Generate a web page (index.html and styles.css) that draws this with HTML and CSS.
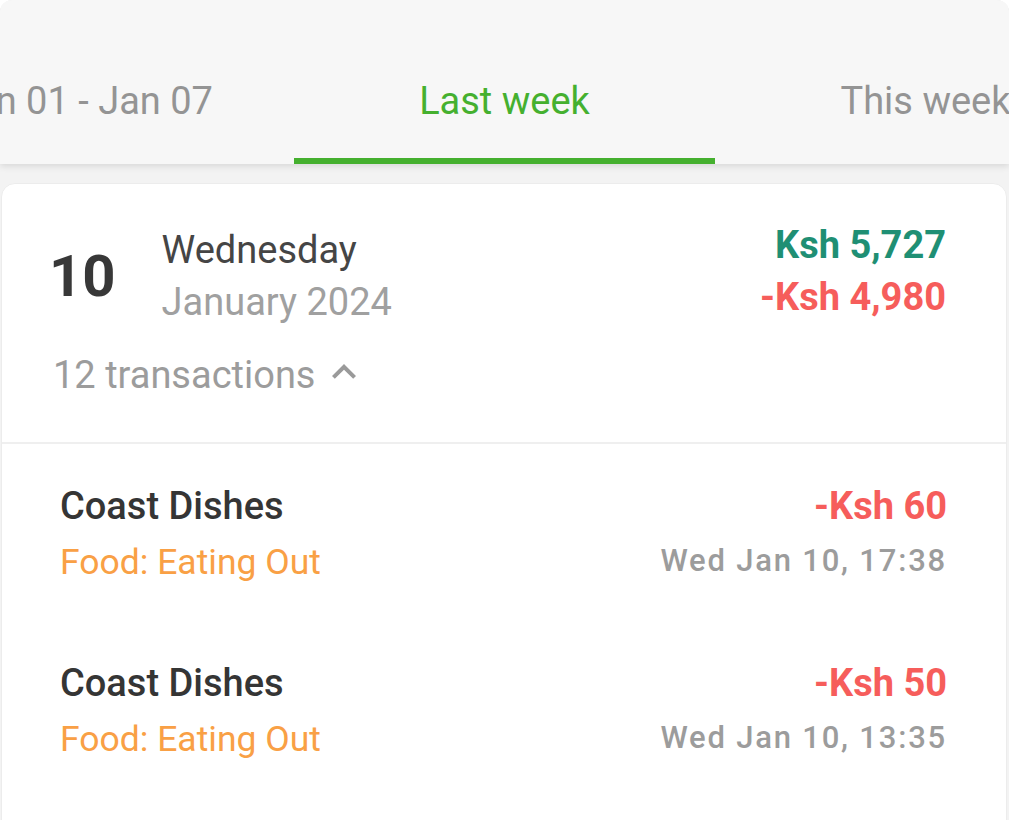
FILE: index.html
```html
<!DOCTYPE html>
<html lang="en">
<head>
  <meta charset="UTF-8" />
  <meta name="viewport" content="width=device-width, initial-scale=1.0" />
  <title>Transactions</title>
  <link rel="stylesheet" href="styles.css">
</head>
<body>
  <div class="app">
    <nav class="tabs">
      <div class="tab-strip">
        <a class="tab">Jan 01 - Jan 07</a>
        <a class="tab active">Last week</a>
        <a class="tab">This week</a>
      </div>
    </nav>

    <section class="day-card">
      <header class="day-head">
        <div class="day-date">
          <span class="day-num">10</span>
          <div class="day-names">
            <div class="weekday">Wednesday</div>
            <div class="month">January 2024</div>
          </div>
        </div>
        <div class="day-totals">
          <div class="income">Ksh 5,727</div>
          <div class="expense">-Ksh 4,980</div>
        </div>
      </header>

      <div class="tx-toggle">
        <span>12 transactions</span>
        <svg class="chevron" viewBox="0 0 24 24" width="48" height="48">
          <path d="M7.41 15.41L12 10.83l4.59 4.58L18 14l-6-6-6 6z" fill="#9a9a9a" />
        </svg>
      </div>

      <ul class="tx-list">
        <li class="tx">
          <div class="tx-left">
            <div class="tx-title">Coast Dishes</div>
            <div class="tx-cat">Food: Eating Out</div>
          </div>
          <div class="tx-right">
            <div class="tx-amount">-Ksh 60</div>
            <div class="tx-time">Wed Jan 10, 17:38</div>
          </div>
        </li>
        <li class="tx">
          <div class="tx-left">
            <div class="tx-title">Coast Dishes</div>
            <div class="tx-cat">Food: Eating Out</div>
          </div>
          <div class="tx-right">
            <div class="tx-amount">-Ksh 50</div>
            <div class="tx-time">Wed Jan 10, 13:35</div>
          </div>
        </li>
      </ul>
    </section>
  </div>
</body>
</html>
```

FILE: styles.css
```css
  html, body {
    margin: 0;
    height: 100%;
    overflow: hidden;
    background: #ffffff;
  }

  body {
    font-family: Roboto, "Noto Sans", sans-serif;
    color: #333;
  }

  .app {
    height: 100%;
    background: #f3f3f3;
    border-radius: 12px 12px 0 0;
    overflow: hidden;
  }

  /* top tabs */
  .tabs {
    position: relative;
    z-index: 2;
    height: 164px;
    background: #f7f7f7;
    box-shadow: 0 2px 7px rgba(0, 0, 0, 0.12);
    overflow: hidden;
  }

  .tab-strip {
    display: flex;
    margin-left: -127px;
  }

  .tab {
    flex: 0 0 421px;
    box-sizing: border-box;
    height: 164px;
    padding-top: 82px;
    border-bottom: 6px solid transparent;
    text-align: center;
    white-space: nowrap;
    font-size: 38px;
    line-height: 38px;
    color: #949494;
  }

  .tab.active {
    color: #45b02f;
    border-bottom-color: #45b02f;
  }

  /* day card */
  .day-card {
    min-height: 760px;
    margin: 19px 2px 0 1px;
    background: #fff;
    border: 1px solid #ececec;
    border-radius: 14px;
    overflow: hidden;
  }

  .day-head {
    display: flex;
    justify-content: space-between;
    align-items: flex-start;
    padding: 35px 60px 0 47px;
  }

  .day-date {
    display: flex;
    align-items: center;
    gap: 46px;
    margin-top: 5px;
  }

  .day-num {
    font-size: 58px;
    line-height: 58px;
    font-weight: 700;
    color: #383838;
  }

  .weekday, .month {
    font-size: 38px;
    line-height: 52px;
  }

  .weekday {
    color: #454545;
  }

  .month {
    color: #a0a0a0;
  }

  .day-totals {
    text-align: right;
    font-weight: 700;
  }

  .income, .expense {
    font-size: 38px;
    line-height: 52px;
  }

  .income {
    color: #1f8f74;
  }

  .expense {
    color: #f65d5b;
  }

  .tx-toggle {
    display: flex;
    align-items: center;
    padding: 20px 0 40px 51px;
    font-size: 38px;
    line-height: 52px;
    color: #9c9c9c;
    border-bottom: 2px solid #efefef;
  }

  .chevron {
    margin-left: 5px;
    margin-bottom: 6px;
  }

  /* transaction rows */
  .tx-list {
    list-style: none;
    margin: 0;
    padding: 0;
  }

  .tx {
    display: flex;
    justify-content: space-between;
    padding: 36px 59px 29px 58px;
  }

  .tx-title {
    font-size: 38px;
    line-height: 52px;
    font-weight: 500;
    color: #353535;
  }

  .tx-cat {
    font-size: 35.5px;
    line-height: 60px;
    color: #f9a045;
  }

  .tx-right {
    text-align: right;
  }

  .tx-amount {
    font-size: 38px;
    line-height: 52px;
    font-weight: 700;
    color: #f65d5b;
  }

  .tx-time {
    font-size: 31px;
    line-height: 58px;
    font-weight: 500;
    letter-spacing: 1.8px;
    color: #9c9c9c;
  }
```
